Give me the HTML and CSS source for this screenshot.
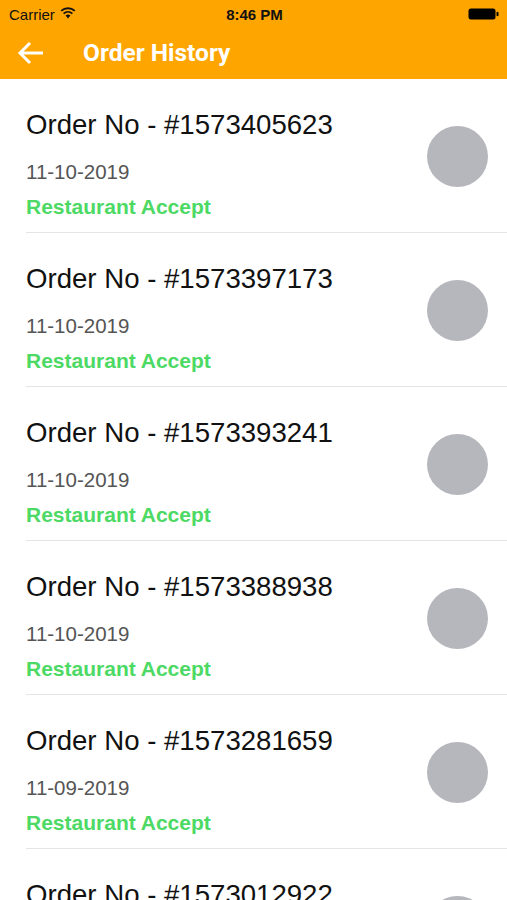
FILE: index.html
```html
<!DOCTYPE html>
<html>
<head>
<meta charset="utf-8">
<link rel="stylesheet" href="styles.css">
</head>
<body>
<div class="app">
  <header class="top">
    <div class="status">
      <div class="st-left">
        <span class="carrier">Carrier</span>
        <svg class="wifi" width="16" height="12" viewBox="0 0 16 12">
          <path d="M8 11.5 L5.6 8.6 A3.8 3.8 0 0 1 10.4 8.6 Z" fill="#111"/>
          <path d="M3.6 6.6 A6.6 6.6 0 0 1 12.4 6.6" fill="none" stroke="#111" stroke-width="1.8"/>
          <path d="M1.2 3.9 A10 10 0 0 1 14.8 3.9" fill="none" stroke="#111" stroke-width="1.8"/>
        </svg>
      </div>
      <div class="time">8:46 PM</div>
      <div class="st-right">
        <svg width="32" height="12" viewBox="0 0 32 12">
          <rect x="0.5" y="0.5" width="27" height="11" rx="2.5" fill="#000"/>
          <rect x="28.5" y="3.8" width="2" height="4.4" rx="1" fill="#000"/>
        </svg>
      </div>
    </div>
    <div class="nav">
      <svg class="back" width="28" height="24" viewBox="0 0 28 24">
        <path d="M26 12 H3 M13 2 L3 12 L13 22" fill="none" stroke="#fff" stroke-width="3" stroke-linecap="butt" stroke-linejoin="miter"/>
      </svg>
      <h1 class="title">Order History</h1>
    </div>
  </header>
  <ul class="list">
    <li class="row"><div class="info"><div class="ono">Order No - #1573405623</div><div class="date">11-10-2019</div><div class="state">Restaurant Accept</div></div><div class="thumb"></div></li>
    <li class="row"><div class="info"><div class="ono">Order No - #1573397173</div><div class="date">11-10-2019</div><div class="state">Restaurant Accept</div></div><div class="thumb"></div></li>
    <li class="row"><div class="info"><div class="ono">Order No - #1573393241</div><div class="date">11-10-2019</div><div class="state">Restaurant Accept</div></div><div class="thumb"></div></li>
    <li class="row"><div class="info"><div class="ono">Order No - #1573388938</div><div class="date">11-10-2019</div><div class="state">Restaurant Accept</div></div><div class="thumb"></div></li>
    <li class="row"><div class="info"><div class="ono">Order No - #1573281659</div><div class="date">11-09-2019</div><div class="state">Restaurant Accept</div></div><div class="thumb"></div></li>
    <li class="row"><div class="info"><div class="ono">Order No - #1573012922</div><div class="date">11-08-2019</div><div class="state">Restaurant Accept</div></div><div class="thumb"></div></li>
  </ul>
</div>
</body>
</html>
```
FILE: styles.css
```css
* { box-sizing: border-box; margin: 0; padding: 0; }
html, body { width: 507px; height: 900px; overflow: hidden; background: #fff; }
body { font-family: "Liberation Sans", Arial, sans-serif; }
.app { width: 507px; height: 900px; overflow: hidden; }
.top { background: #ffa500; height: 79px; }
.status { height: 28px; display: flex; align-items: center; justify-content: space-between; padding: 0 7px 0 9px; }
.st-left { display: flex; align-items: center; gap: 5px; width: 120px; }
.carrier { font-size: 15px; color: #111; }
.wifi { margin-top: -2px; }
.time { font-size: 15px; font-weight: bold; color: #111; }
.st-right { width: 120px; display: flex; justify-content: flex-end; }
.nav { height: 51px; display: flex; align-items: center; padding: 0 0 0 17px; }
.back { margin-top: -1px; }
.title { margin-left: 38px; font-family: Roboto, "Liberation Sans", sans-serif; font-weight: 700; font-size: 24.5px; color: #fff; margin-top: -3px; }
.list { list-style: none; }
.row { display: flex; align-items: center; height: 154px; margin-left: 26px; border-bottom: 1px solid #e4e4e4; }
.info { flex: 1; align-self: stretch; padding-top: 30px; }
.ono { font-size: 27.6px; color: #111; line-height: 32px; }
.date { font-size: 20.5px; color: #555; line-height: 24px; margin-top: 19px; }
.state { font-size: 21px; font-weight: bold; color: #4cd964; line-height: 24px; margin-top: 11px; }
.thumb { width: 61px; height: 61px; border-radius: 50%; background: #b6b6bd; margin-right: 19px; margin-top: 1px; }
```
